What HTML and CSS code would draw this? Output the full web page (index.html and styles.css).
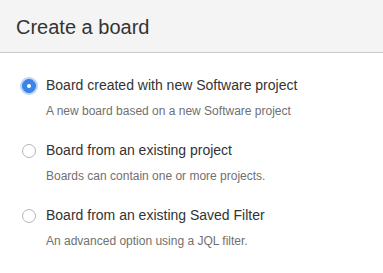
FILE: index.html
```html
<!DOCTYPE html>
<html>
<head>
<meta charset="utf-8">
<link rel="stylesheet" href="styles.css">
</head>
<body>
<div class="dialog">
  <div class="header"><h2 class="title">Create a board</h2></div>
  <div class="options">
    <label class="option">
      <span class="radio checked"></span>
      <span class="text">
        <span class="label">Board created with new Software project</span>
        <span class="desc">A new board based on a new Software project</span>
      </span>
    </label>
    <label class="option">
      <span class="radio"></span>
      <span class="text">
        <span class="label">Board from an existing project</span>
        <span class="desc">Boards can contain one or more projects.</span>
      </span>
    </label>
    <label class="option">
      <span class="radio"></span>
      <span class="text">
        <span class="label">Board from an existing Saved Filter</span>
        <span class="desc">An advanced option using a JQL filter.</span>
      </span>
    </label>
  </div>
</div>
</body>
</html>
```

FILE: styles.css
```css
html, body {
  margin: 0;
  padding: 0;
  background: #fff;
}
body {
  font-family: "Liberation Sans", Arial, sans-serif;
  color: #333;
}
.dialog {
  width: 383px;
  height: 273px;
  overflow: hidden;
}
.header {
  height: 52px;
  background: #f4f4f4;
  border-bottom: 1px solid #cccccc;
  display: flex;
  align-items: center;
  padding-left: 16px;
}
.title {
  margin: 0;
  font-size: 20px;
  font-weight: normal;
  color: #333;
  line-height: 24px;
  padding-top: 2px;
}
.options {
  display: flex;
  flex-direction: column;
  gap: 23px;
  padding: 24px 0 0 22px;
}
.option {
  display: flex;
  align-items: flex-start;
  gap: 10px;
}
.radio {
  width: 12px;
  height: 12px;
  border: 1px solid #b5b5b5;
  border-radius: 50%;
  background: #fff;
  margin-top: 2px;
  flex: none;
  box-sizing: content-box;
  position: relative;
}
.radio.checked {
  background: #3b84e8;
  border-color: #3a7fdf;
  box-shadow: 0 0 0 2px #b9d5fb;
}
.radio.checked::after {
  content: "";
  position: absolute;
  left: 4px;
  top: 4px;
  width: 4px;
  height: 4px;
  border-radius: 50%;
  background: #fff;
}
.text {
  display: flex;
  flex-direction: column;
  gap: 9px;
}
.label {
  font-size: 14px;
  line-height: 17px;
  color: #333;
}
.desc {
  font-size: 12px;
  line-height: 16px;
  color: #707070;
}
```
